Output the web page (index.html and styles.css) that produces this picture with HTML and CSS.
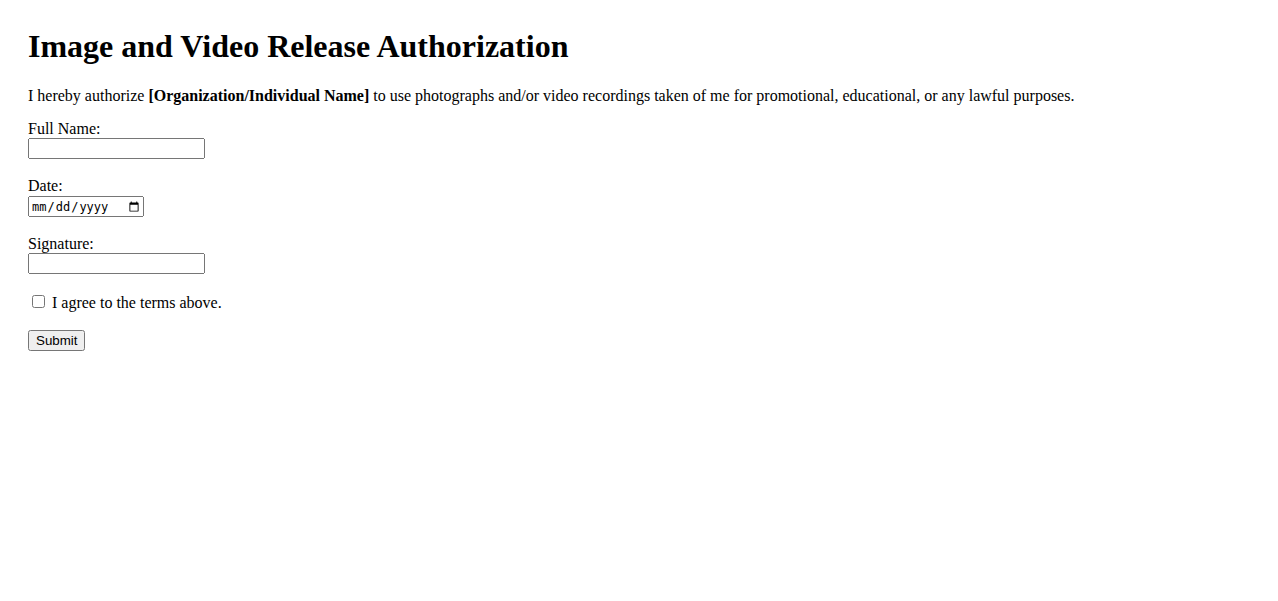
FILE: index.html
```html
<!DOCTYPE html>
<html lang="en">
<head>
    <meta charset="UTF-8">
    <meta name="viewport" content="width=device-width, initial-scale=1.0">
    <title>Image and Video Release Authorization</title>
    <link rel="stylesheet" href="styles.css">
</head>
<body>
    <div class="container">
        <h1>Image and Video Release Authorization</h1>
        <p>I hereby authorize <strong>[Organization/Individual Name]</strong> to use photographs and/or video recordings taken of me for promotional, educational, or any lawful purposes.</p>

        <form>
            <label for="name">Full Name:</label><br>
            <input type="text" id="name" name="name"><br><br>

            <label for="date">Date:</label><br>
            <input type="date" id="date" name="date"><br><br>

            <label for="signature">Signature:</label><br>
            <input type="text" id="signature" name="signature"><br><br>

            <input type="checkbox" id="agree" name="agree">
            <label for="agree">I agree to the terms above.</label><br><br>

            <button type="submit">Submit</button>
        </form>
    </div>
</body>
</html>
```

FILE: styles.css
```css
body {
    margin: 8px;
    font-family: 'Liberation Serif', 'Times New Roman', serif;
    font-size: 16px;
    color: #000;
    background: #fff;
}

.container {
    padding: 20px;
}

h1 {
    font-size: 32px;
    margin: 0 0 22px;
}

p {
    margin: 0 0 15px;
}

input[type="text"] {
    box-sizing: border-box;
    width: 177px;
    height: 21px;
    font-family: 'Liberation Sans', Arial, sans-serif;
    font-size: 13.33px;
}

input[type="date"] {
    box-sizing: border-box;
    width: 116px;
    height: 21px;
    margin-top: 1px;
    font-family: 'DejaVu Sans Mono', 'Liberation Mono', monospace;
    font-size: 12px;
}

button {
    padding: 1px 6px;
    font-family: 'Liberation Sans', Arial, sans-serif;
    font-size: 13.33px;
}
```
